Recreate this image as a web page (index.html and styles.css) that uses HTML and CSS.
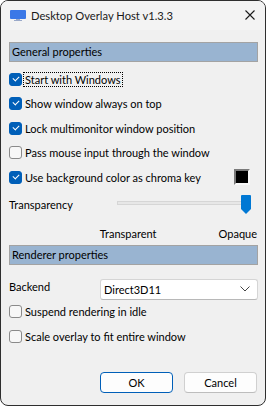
FILE: index.html
```html
<!DOCTYPE html>
<html>
  <head>
    <title>Desktop Overlay Host v1.3.3</title>
    <link rel="stylesheet" href="styles.css">
  </head>
  <body>
    <div class="window">
      <div class="titlebar">
        <svg class="appicon" width="16" height="16" viewBox="0 0 16 16">
          <rect x="0" y="0" width="16" height="9" rx="1" fill="#3b78e7"/>
          <rect x="6" y="9" width="4" height="1" fill="#9aa9c9"/>
          <rect x="4" y="10" width="8" height="1" fill="#9aa9c9"/>
        </svg>
        <span class="title">Desktop Overlay Host v1.3.3</span>
        <svg class="close" width="10" height="10" viewBox="0 0 10 10">
          <path d="M0.5 0.5 L9.5 9.5 M9.5 0.5 L0.5 9.5" stroke="#1a1a1a" stroke-width="1.1" fill="none"/>
        </svg>
      </div>
      <div class="content">
        <div class="group">General properties</div>
        <div class="options">
          <label class="check on"><span class="box"></span><span class="text focus">Start with Windows</span></label>
          <label class="check on"><span class="box"></span><span class="text">Show window always on top</span></label>
          <label class="check on"><span class="box"></span><span class="text">Lock multimonitor window position</span></label>
          <label class="check"><span class="box"></span><span class="text">Pass mouse input through the window</span></label>
          <div class="chroma">
            <label class="check on"><span class="box"></span><span class="text">Use background color as chroma key</span></label>
            <span class="swatch"></span>
          </div>
        </div>
        <div class="slider-row">
          <span>Transparency</span>
          <div class="slider">
            <div class="track"></div>
            <svg class="thumb" width="10" height="19" viewBox="0 0 10 19">
              <path d="M1 0 H9 Q10 0 10 1 V14 L5 19 L0 14 V1 Q0 0 1 0 Z" fill="#0078d4"/>
            </svg>
          </div>
        </div>
        <div class="scale-labels">
          <span class="lbl-left">Transparent</span>
          <span>Opaque</span>
        </div>
        <div class="group">Renderer properties</div>
        <div class="backend">
          <span>Backend</span>
          <div class="select">
            <span>Direct3D11</span>
            <svg width="10" height="6" viewBox="0 0 10 6">
              <path d="M0.5 0.5 L5 5 L9.5 0.5" stroke="#444" stroke-width="1" fill="none"/>
            </svg>
          </div>
        </div>
        <div class="options">
          <label class="check"><span class="box"></span><span class="text">Suspend rendering in idle</span></label>
          <label class="check"><span class="box"></span><span class="text">Scale overlay to fit entire window</span></label>
        </div>
        <div class="buttons">
          <button class="btn default">OK</button>
          <button class="btn">Cancel</button>
        </div>
      </div>
    </div>
  </body>
</html>
```

FILE: styles.css
```css
*{
  margin:0;
  padding:0;
  box-sizing:border-box;
}
html, body{
  background:#fff;
  width:266px;
  height:406px;
  overflow:hidden;
}
body{
  font-family:Lato, "Liberation Sans", sans-serif;
  font-size:11px;
  color:#000;
}
.window{
  width:266px;
  height:406px;
  border:1px solid #2e2e2e;
  border-radius:8px;
  background:#f0f0f0;
  display:flex;
  flex-direction:column;
  overflow:hidden;
}
.titlebar{
  height:29px;
  background:#f3f3f3;
  display:flex;
  align-items:center;
  padding-left:9px;
  padding-right:10px;
}
.appicon{
  margin-top:4px;
  margin-right:5px;
}
.title{
  flex:1;
  color:#1a1a1a;
  font-size:11.2px;
  margin-top:-1px;
}
.close{
  margin-top:-1px;
}
.content{
  flex:1;
  display:flex;
  flex-direction:column;
  padding:12px 7px 12px 8px;
}
.group{
  height:20px;
  line-height:18px;
  background:#99b4d1;
  border:1px solid #a3a3a3;
  padding-left:2px;
}
.options{
  display:flex;
  flex-direction:column;
  margin-top:5px;
}
.check{
  height:24.5px;
  display:flex;
  align-items:center;
  white-space:nowrap;
}
.box{
  width:13px;
  height:13px;
  border:1px solid #8a8a8a;
  border-radius:3px;
  background:#f7f7f7;
  margin-right:2px;
  flex:none;
  position:relative;
}
.check.on .box{
  background:#005fb8;
  border-color:#005fb8;
}
.check.on .box::after{
  content:"";
  position:absolute;
  left:3px;
  top:2px;
  width:5px;
  height:3px;
  border-left:1px solid #fff;
  border-bottom:1px solid #fff;
  transform:rotate(-45deg);
}
.text{
  line-height:13px;
  padding:0 1px;
  border:1px dotted transparent;
  margin-left:-1px;
}
.text.focus{
  border-color:#000;
}
.chroma{
  display:flex;
  align-items:center;
  justify-content:space-between;
}
.swatch{
  width:16px;
  height:16px;
  background:#000;
  border:2px solid #7a7a7a;
  border-right-color:#fafafa;
  border-bottom-color:#fafafa;
  margin-right:8px;
}
.slider-row{
  height:29px;
  display:flex;
  align-items:center;
}
.slider-row > span{
  width:108px;
}
.slider{
  flex:1;
  position:relative;
  height:19px;
  margin-right:7px;
}
.track{
  position:absolute;
  left:0;
  right:5px;
  top:6px;
  height:4px;
  background:#e7e7e7;
  border:1px solid #d6d6d6;
}
.thumb{
  position:absolute;
  right:0;
  top:0;
}
.scale-labels{
  height:22px;
  margin-top:4px;
  display:flex;
  align-items:center;
  justify-content:flex-end;
  padding-right:1px;
}
.lbl-left{
  margin-right:62px;
}
.backend{
  display:flex;
  align-items:center;
  margin-top:14px;
}
.backend > span{
  width:91px;
  margin-top:-6px;
}
.select{
  flex:1;
  height:21px;
  background:#fff;
  border:1px solid #d5d5d5;
  border-bottom-color:#b8b8b8;
  border-radius:3px;
  display:flex;
  align-items:center;
  justify-content:space-between;
  padding:0 7px 0 3px;
}
.backend + .options{
  margin-top:0;
}
.buttons{
  margin-top:auto;
  display:flex;
  justify-content:flex-end;
  gap:11px;
  padding-right:1px;
}
.btn{
  width:73px;
  height:21px;
  font-family:inherit;
  font-size:11px;
  background:#fdfdfd;
  border:1px solid #d0d0d0;
  border-bottom-color:#bdbdbd;
  border-radius:4px;
  color:#000;
}
.btn.default{
  border:1px solid #005fb8;
}
```
